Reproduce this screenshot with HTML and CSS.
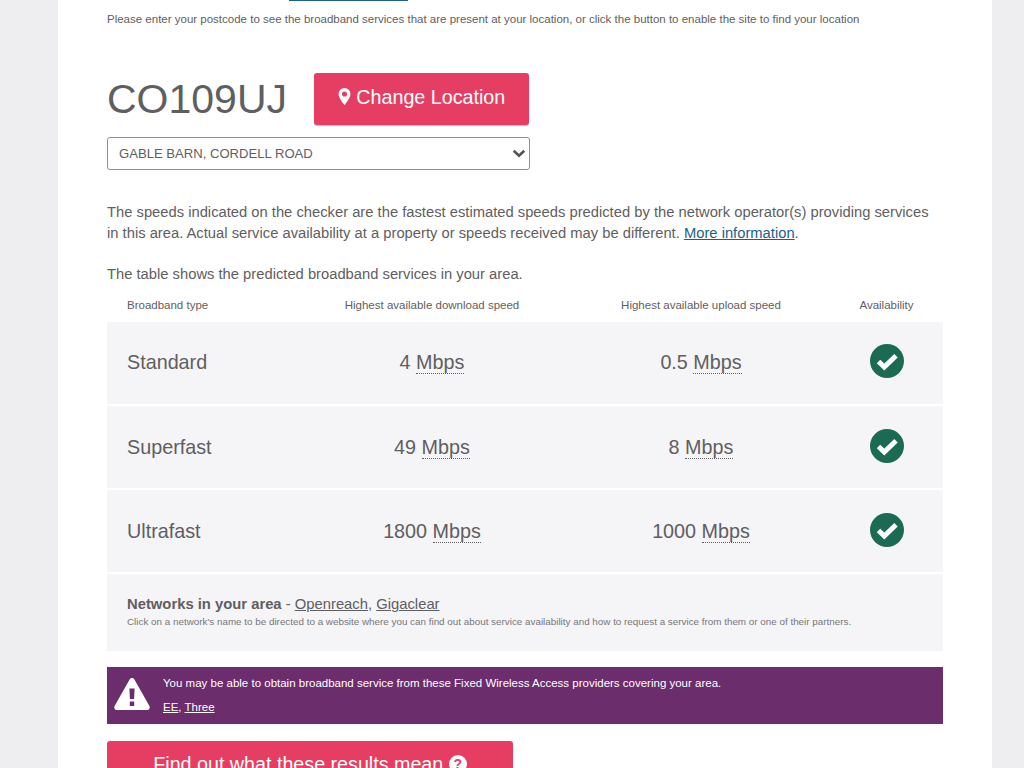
FILE: index.html
```html
<!DOCTYPE html>
<html lang="en">
<head>
  <meta charset="UTF-8">
  <meta name="viewport" content="width=device-width, initial-scale=1.0">
  <title>Broadband checker</title>
  <link rel="stylesheet" href="styles.css">
</head>
<body>
  <main class="card">
    <p class="lead">Check broadband area or <a href="#">use your location</a></p>
    <p class="note">Please enter your postcode to see the broadband services that are present at your location, or click the button to enable the site to find your location</p>

    <div class="location">
      <h1>CO109UJ</h1>
      <a class="btn btn-change" href="#">
        <svg class="pin" viewBox="0 0 12 16" aria-hidden="true"><path fill-rule="evenodd" d="M6 0a5.600 5.600 0 0 1 5.600 5.600c0 2.600-3.200 7.600-5.600 10.400C3.600 13.200.4 8.200.4 5.600A5.600 5.600 0 0 1 6 0zm0 3.300a2.400 2.400 0 1 0 0 4.800 2.400 2.400 0 0 0 0-4.800z"/></svg>
        Change Location
      </a>
    </div>

    <div class="address-wrap">
      <select class="address">
        <option>GABLE BARN, CORDELL ROAD</option>
      </select>
      <svg class="chevron" viewBox="0 0 12 8" aria-hidden="true"><path d="M1.300 1.500L6 6l4.700-4.500"/></svg>
    </div>

    <p class="info">The speeds indicated on the checker are the fastest estimated speeds predicted by the network operator(s) providing services in this area. Actual service availability at a property or speeds received may be different. <a href="#">More information</a>.</p>
    <p class="info intro">The table shows the predicted broadband services in your area.</p>

    <div class="table-head">
      <span class="type">Broadband type</span>
      <span>Highest available download speed</span>
      <span>Highest available upload speed</span>
      <span>Availability</span>
    </div>

    <div class="row row-first">
      <span class="type">Standard</span>
      <span>4 <abbr>Mbps</abbr></span>
      <span>0.5 <abbr>Mbps</abbr></span>
      <svg class="tick" viewBox="0 0 34 34" aria-hidden="true"><circle cx="17" cy="17" r="17"/><path d="M8.500 17.500l5.800 5.600L26 11.800"/></svg>
    </div>
    <div class="row">
      <span class="type">Superfast</span>
      <span>49 <abbr>Mbps</abbr></span>
      <span>8 <abbr>Mbps</abbr></span>
      <svg class="tick" viewBox="0 0 34 34" aria-hidden="true"><circle cx="17" cy="17" r="17"/><path d="M8.500 17.500l5.800 5.600L26 11.800"/></svg>
    </div>
    <div class="row">
      <span class="type">Ultrafast</span>
      <span>1800 <abbr>Mbps</abbr></span>
      <span>1000 <abbr>Mbps</abbr></span>
      <svg class="tick" viewBox="0 0 34 34" aria-hidden="true"><circle cx="17" cy="17" r="17"/><path d="M8.500 17.500l5.800 5.600L26 11.800"/></svg>
    </div>

    <div class="networks">
      <p class="networks-title"><strong>Networks in your area</strong> - <a href="#">Openreach</a>, <a href="#">Gigaclear</a></p>
      <p class="networks-note">Click on a network's name to be directed to a website where you can find out about service availability and how to request a service from them or one of their partners.</p>
    </div>

    <div class="wireless">
      <svg class="warn" viewBox="0 0 36 32" aria-hidden="true"><path fill-rule="evenodd" d="M18 0c1 0 1.800.5 2.400 1.500l15 26.500c1 1.900-.2 4-2.400 4H3c-2.200 0-3.400-2.100-2.400-4l15-26.500C16.200.5 17 0 18 0zm-2.600 10.500l.5 10.500h4.200l.5-10.500zm.4 13v4.500h4.400v-4.500z"/></svg>
      <div>
        <p>You may be able to obtain broadband service from these Fixed Wireless Access providers covering your area.</p>
        <p class="wireless-links"><a href="#">EE</a>, <a href="#">Three</a></p>
      </div>
    </div>

    <a class="btn btn-results" href="#">Find out what these results mean <span class="help">?</span></a>
  </main>
</body>
</html>
```

FILE: styles.css
```css
html, body {
  height: 768px;
  overflow: hidden;
}
body {
  margin: 0;
  background-color: #eeeef1;
  font-family: "Liberation Sans", Arial, sans-serif;
  color: #5f5e61;
}
p {
  margin: 0;
}
.card {
  box-sizing: border-box;
  width: 934px;
  margin: -20px 0 0 58px;
  padding: 0 49px;
  background-color: #fff;
}
.lead {
  height: 21px;
  font-size: 15.7px;
  line-height: 22px;
}
.lead a {
  color: #5f5e61;
  text-decoration: none;
  border-bottom: 2px solid #1d5f8a;
}
.note {
  margin-top: 10px;
  font-size: 11.5px;
  line-height: 16px;
  white-space: nowrap;
}
.location {
  display: flex;
  align-items: center;
  gap: 27px;
  margin-top: 46px;
}
h1 {
  margin: 0;
  font-size: 41px;
  font-weight: 400;
  line-height: 52px;
}
.btn {
  display: block;
  color: #fff;
  background-color: #e63e62;
  border-radius: 3px;
  text-decoration: none;
  text-align: center;
}
.btn-change {
  box-sizing: border-box;
  width: 215px;
  height: 52px;
  font-size: 19.7px;
  line-height: 49px;
  box-shadow: 0 1px 1px rgba(0, 0, 0, 0.25);
}
.pin {
  width: 13px;
  height: 17px;
  fill: #fff;
  vertical-align: -1px;
}
.address-wrap {
  position: relative;
  width: 423px;
  margin-top: 12px;
}
.address {
  display: block;
  width: 100%;
  height: 33px;
  padding: 0 11px;
  font-family: inherit;
  font-size: 13.1px;
  color: #5f5e61;
  background-color: #fff;
  border: 1px solid #8f8f92;
  border-radius: 3px;
  appearance: none;
}
.chevron {
  position: absolute;
  top: 12px;
  right: 4px;
  width: 14px;
  height: 9px;
  fill: none;
  stroke: #55545a;
  stroke-width: 2.4;
  pointer-events: none;
}
.info {
  margin-top: 32px;
  width: 830px;
  font-size: 14.75px;
  line-height: 21px;
}
.info a {
  color: #1d5f8a;
}
.info.intro {
  margin-top: 20px;
}
.table-head,
.row {
  display: grid;
  grid-template-columns: 190px 270px 268px 1fr;
  align-items: center;
  width: 836px;
  text-align: center;
}
.type {
  padding-left: 20px;
  text-align: left;
}
.table-head {
  height: 37px;
  padding-top: 3px;
  box-sizing: border-box;
  font-size: 11.5px;
}
.table-head span:last-child {
  margin-left: -5px;
}
.row {
  height: 82px;
  margin-bottom: 2px;
  box-sizing: border-box;
  font-size: 19.75px;
  background-color: #f5f4f7;
}
.row-first {
  padding-bottom: 2px;
}
abbr {
  text-decoration: none;
  border-bottom: 1px dotted #5f5e61;
}
.tick {
  justify-self: center;
  width: 34px;
  height: 34px;
  margin: -2px 0 0 -5px;
}
.tick circle {
  fill: #1a6b52;
}
.tick path {
  fill: none;
  stroke: #fff;
  stroke-width: 5;
}
.networks {
  box-sizing: border-box;
  width: 836px;
  height: 77px;
  padding: 21px 20px 0;
  background-color: #f5f4f7;
}
.networks-title {
  font-size: 14.8px;
  line-height: 19px;
}
.networks-title a {
  color: #5f5e61;
}
.networks-note {
  margin-top: 1px;
  font-size: 9.85px;
  line-height: 14px;
  color: #77767a;
}
.wireless {
  display: flex;
  align-items: center;
  gap: 13px;
  box-sizing: border-box;
  width: 836px;
  height: 57px;
  margin-top: 16px;
  padding: 0 7px 1px;
  font-size: 11.5px;
  color: #fff;
  background-color: #6b2d6b;
}
.warn {
  flex: none;
  width: 36px;
  height: 32px;
  margin-top: -2px;
  fill: #fff;
}
.wireless a {
  color: #fff;
}
.wireless-links {
  margin-top: 12px;
}
.btn-results {
  box-sizing: border-box;
  width: 406px;
  height: 60px;
  margin-top: 17px;
  font-size: 19.7px;
  line-height: 46px;
}
.help {
  display: inline-block;
  width: 18px;
  height: 18px;
  font-size: 14px;
  font-weight: 700;
  line-height: 18px;
  color: #e63e62;
  background-color: #fff;
  border-radius: 50%;
  vertical-align: 2px;
}
```
